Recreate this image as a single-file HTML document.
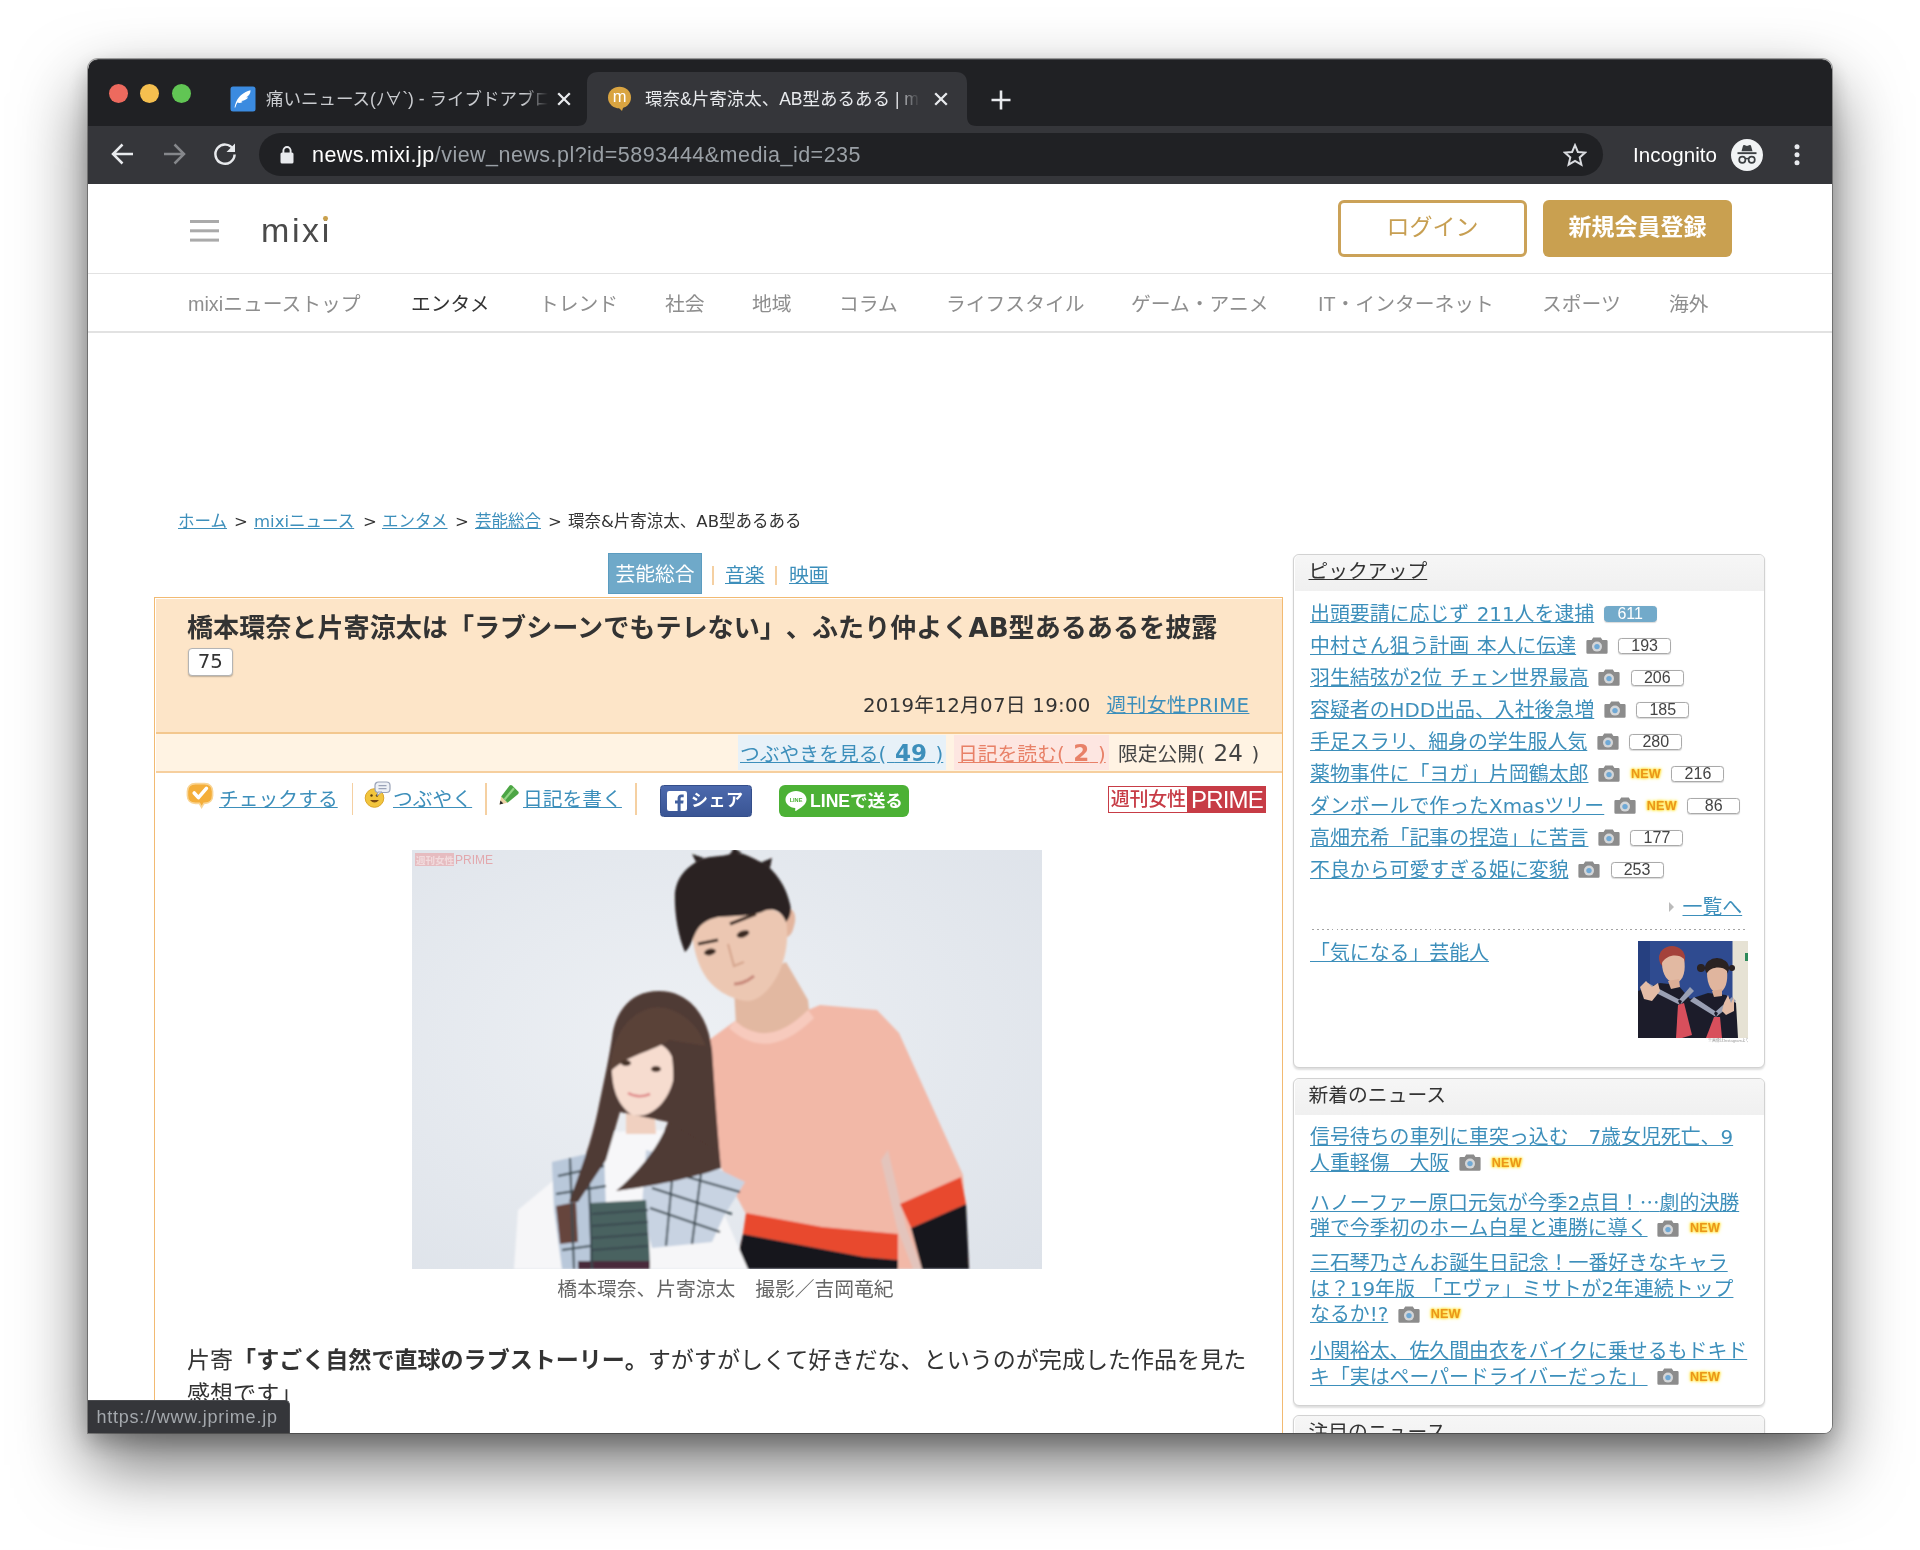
<!DOCTYPE html>
<html lang="ja">
<head>
<meta charset="utf-8">
<title>環奈&amp;片寄涼太、AB型あるある | mixiニュース</title>
<style>
*{box-sizing:border-box;margin:0;padding:0}
html,body{width:1920px;height:1550px;overflow:hidden;background:#fff}
body{text-spacing-trim:space-all;position:relative;font-family:"Liberation Sans","Noto Sans CJK JP",sans-serif;color:#333}
.abs{position:absolute}
a{color:#3d8fbb;text-decoration:underline}
#win{will-change:transform;position:absolute;left:88px;top:59px;width:1744px;height:1374px;border-radius:10px 10px 8px 0;background:#fff;overflow:hidden;
 box-shadow:0 0 0 1px rgba(0,0,0,.32),0 32px 70px rgba(0,0,0,.56),0 9px 22px rgba(0,0,0,.23)}
#shadow{position:absolute;left:88px;top:59px;width:1744px;height:1374px;border-radius:10px;}
/* chrome */
#tabstrip{position:absolute;left:0;top:0;width:1744px;height:67px;background:#202124;border-radius:10px 10px 0 0;box-shadow:inset 0 1px 0 rgba(255,255,255,.16)}
#toolbar{position:absolute;left:0;top:67px;width:1744px;height:58px;background:#35363a}
.tl{position:absolute;top:25px;width:19px;height:19px;border-radius:50%}
.tabtitle{position:absolute;top:28.4px;font-size:17.5px;line-height:24px;white-space:nowrap;overflow:hidden;color:#e8eaed}
#omni{position:absolute;left:171px;top:74px;width:1344px;height:43px;border-radius:22px;background:#202124}
/* page */
#page{position:absolute;left:0;top:125px;width:1744px;height:1249px;background:#fff;overflow:hidden}

#pg{position:absolute;left:-88px;top:-184px;width:1920px;height:1550px;font-family:"DejaVu Sans","Noto Sans CJK JP",sans-serif}
#pg .t{position:absolute;white-space:nowrap}
.nav{position:absolute;top:289px;height:30px;font-size:19.8px;line-height:30px;color:#8e8e8e;white-space:nowrap;font-family:"Liberation Sans","Noto Sans CJK JP",sans-serif}
.bc{position:absolute;top:510px;height:24px;font-size:16.5px;line-height:24px;white-space:nowrap;color:#333}

.sbox{position:absolute;left:1293px;width:472px;border:1.5px solid #d2d2d2;border-radius:6px;background:#fff;box-shadow:0 1.5px 2px rgba(0,0,0,.13)}
.shead{position:absolute;left:1294.5px;width:469px;height:36px;background:linear-gradient(#f6f6f6,#f0f0f0);border-radius:5px 5px 0 0;font-size:19.8px;line-height:34px;padding-left:14px;color:#333;white-space:nowrap}
.row{position:absolute;left:1310px;height:30px;font-size:19.9px;line-height:30px;white-space:nowrap;word-spacing:1.2px}
.item{position:absolute;left:1310px;font-size:19.9px;line-height:25.7px;white-space:nowrap;word-spacing:1.2px}
.cam{display:inline-block;width:22px;height:17px;vertical-align:-1.5px;margin-left:9.5px}
.new{display:inline-block;margin-left:11px;font-family:"Liberation Sans",sans-serif;font-weight:bold;font-size:12.6px;line-height:16px;color:#ea961c;text-shadow:0 0 2px #ffe23e,0 0 2px #ffe23e,0 0 3px #ffe23e,0 0 4px #ffe866;vertical-align:3px;text-decoration:none;letter-spacing:.2px}
.cnt{display:inline-block;width:53px;height:16.5px;margin-left:10.5px;border:1px solid #aaa;border-radius:3.5px;background:#fff;font-family:"Liberation Sans",sans-serif;font-size:16px;line-height:14.5px;color:#444;text-align:center;vertical-align:1.8px;box-shadow:0 .5px 1px rgba(0,0,0,.15)}
.cnt.hot{background:#72aaca;border-color:#72aaca;color:#fff;margin-left:9.5px}
.sep{position:absolute;width:1.6px;background:#f5d0a2}
</style>
</head>
<body>
<div id="win">
  <div id="tabstrip">
    <div class="tl" style="left:21px;background:#ed6a5e"></div>
    <div class="tl" style="left:52px;background:#f5bf4f"></div>
    <div class="tl" style="left:84px;background:#61c554"></div>
    <!-- active tab -->
    <svg class="abs" style="left:489px;top:13px" width="400" height="54" viewBox="0 0 400 54">
      <path d="M0 54 C8 54 10 50 10 44 L10 11 C10 4 14 0 21 0 L379 0 C386 0 390 4 390 11 L390 44 C390 50 392 54 400 54 Z" fill="#35363a"/>
    </svg>
    <!-- favicon 1 -->
    <svg class="abs" style="left:142px;top:27px" width="26" height="26" viewBox="0 0 26 26">
      <rect x="0.5" y="0.5" width="25" height="25" rx="2.5" fill="#3b8be0"/>
      <path d="M4.5 21.5 C6 14 9.5 7.5 20.5 4.2 C20.8 8 18.5 10.2 16.2 11.2 L18.2 11.6 C16.5 14 13.5 15 11.2 15 L12.6 16 C10.5 17.2 8.6 17 7.4 16.6 C6.4 18.2 5.8 19.8 5.4 21.6 Z" fill="#fff"/>
    </svg>
    <div class="tabtitle" style="left:178px;width:284px;color:#c9cbcf;-webkit-mask-image:linear-gradient(90deg,#000 258px,transparent 282px);mask-image:linear-gradient(90deg,#000 258px,transparent 282px)">痛いニュース(ﾉ∀`) - ライブドアブログ</div>
    <svg class="abs" style="left:468px;top:32px" width="16" height="16" viewBox="0 0 16 16"><path d="M2.2 2.2 L13.8 13.8 M13.8 2.2 L2.2 13.8" stroke="#e8eaed" stroke-width="2.3" fill="none"/></svg>
    <!-- favicon 2 : mixi -->
    <svg class="abs" style="left:519px;top:27px" width="26" height="26" viewBox="0 0 26 26">
      <ellipse cx="12.5" cy="11.5" rx="11.5" ry="10.8" fill="#d9a441"/>
      <path d="M10 20 L15 25 L17 19 Z" fill="#d9a441"/>
      <text x="12.6" y="16" font-family="Liberation Sans, sans-serif" font-size="16.5" text-anchor="middle" fill="#fff">m</text>
    </svg>
    <div class="tabtitle" style="left:557px;width:282px;-webkit-mask-image:linear-gradient(90deg,#000 250px,transparent 275px);mask-image:linear-gradient(90deg,#000 250px,transparent 275px)">環奈&amp;片寄涼太、AB型あるある | mixiニュース</div>
    <svg class="abs" style="left:845px;top:32px" width="16" height="16" viewBox="0 0 16 16"><path d="M2.2 2.2 L13.8 13.8 M13.8 2.2 L2.2 13.8" stroke="#e8eaed" stroke-width="2.3" fill="none"/></svg>
    <svg class="abs" style="left:902px;top:30px" width="22" height="22" viewBox="0 0 22 22"><path d="M11 1.5 V20.5 M1.5 11 H20.5" stroke="#e8eaed" stroke-width="2.6" fill="none"/></svg>
  </div>
  <div id="toolbar"></div>
  <!-- toolbar icons -->
  <svg class="abs" style="left:22px;top:83px" width="26" height="24" viewBox="0 0 26 24"><path d="M23 12 H3.5 M12.5 2.5 L3 12 L12.5 21.5" stroke="#e8eaed" stroke-width="2.5" fill="none"/></svg>
  <svg class="abs" style="left:73px;top:83px" width="26" height="24" viewBox="0 0 26 24"><path d="M3 12 H22.5 M13.5 2.5 L23 12 L13.5 21.5" stroke="#85878b" stroke-width="2.5" fill="none"/></svg>
  <svg class="abs" style="left:124px;top:82px" width="26" height="26" viewBox="0 0 26 26"><path d="M21.2 8.2 A9.6 9.6 0 1 0 22.6 13.5" stroke="#e8eaed" stroke-width="2.5" fill="none"/><path d="M23 2.5 V11 H14.5 Z" fill="#e8eaed"/></svg>
  <div id="omni"></div>
  <svg class="abs" style="left:192px;top:87px" width="14" height="18" viewBox="0 0 14 18"><rect x="0.5" y="6.5" width="13" height="11" rx="1.6" fill="#e8eaed"/><path d="M3.4 7 V4.6 a3.6 3.6 0 0 1 7.2 0 V7" stroke="#e8eaed" stroke-width="1.9" fill="none"/></svg>
  <div class="abs" id="url" style="left:224px;top:82px;font-size:21.5px;line-height:28px;color:#9aa0a6;white-space:nowrap;letter-spacing:0.47px"><span style="color:#fff">news.mixi.jp</span>/view_news.pl?id=5893444&amp;media_id=235</div>
  <svg class="abs" style="left:1475px;top:84px" width="24" height="24" viewBox="0 0 24 24"><path d="M12 2.2 L14.9 9 L22.2 9.6 L16.7 14.4 L18.4 21.6 L12 17.8 L5.6 21.6 L7.3 14.4 L1.8 9.6 L9.1 9 Z" stroke="#dadce0" stroke-width="2" fill="none" stroke-linejoin="miter"/></svg>
  <div class="abs" id="incog" style="left:1545px;top:82px;font-size:20.5px;line-height:28px;color:#fff;white-space:nowrap;letter-spacing:.1px">Incognito</div>
  <svg class="abs" style="left:1642px;top:79px" width="34" height="34" viewBox="0 0 34 34">
    <circle cx="17" cy="17" r="16" fill="#f1f3f4"/>
    <path d="M11.5 13.2 L13 7.8 Q13.3 6.8 14.3 7.1 L17 8 L19.7 7.1 Q20.7 6.8 21 7.8 L22.5 13.2 Z" fill="#3c4043"/>
    <rect x="7.5" y="14.2" width="19" height="1.9" fill="#3c4043"/>
    <circle cx="12.3" cy="21.7" r="3.1" stroke="#3c4043" stroke-width="1.7" fill="none"/>
    <circle cx="21.7" cy="21.7" r="3.1" stroke="#3c4043" stroke-width="1.7" fill="none"/>
    <path d="M15.2 21 Q17 19.8 18.8 21" stroke="#3c4043" stroke-width="1.5" fill="none"/>
  </svg>
  <svg class="abs" style="left:1704px;top:83px" width="10" height="26" viewBox="0 0 10 26"><circle cx="5" cy="4.8" r="2.5" fill="#e8eaed"/><circle cx="5" cy="12.8" r="2.5" fill="#e8eaed"/><circle cx="5" cy="20.8" r="2.5" fill="#e8eaed"/></svg>

  <div id="page">
    <div id="pg">
      <!-- header -->
      <div class="abs" style="left:190px;top:220px;width:29px;height:2.5px;background:#aaa;box-shadow:0 9.3px 0 #aaa,0 18.6px 0 #aaa"></div>
      <div class="t" id="logo" style="left:261px;top:209px;font-family:'Liberation Sans',sans-serif;font-size:34px;line-height:42px;letter-spacing:2.6px;color:#4a4a4a">mixi</div>
      <div class="abs" id="gdot" style="left:322.9px;top:216.4px;width:4.8px;height:4.8px;border-radius:50%;background:#c9a04b"></div>
      <div class="t" style="left:1338px;top:200px;width:189px;height:57px;border:3px solid #cba258;border-radius:6px;text-align:center;font-size:23px;line-height:49px;color:#c79f52;font-family:'Liberation Sans','Noto Sans CJK JP',sans-serif">ログイン</div>
      <div class="t" style="left:1543px;top:200px;width:189px;height:57px;background:#c9a050;border-radius:6px;text-align:center;font-size:23px;line-height:54px;color:#fff;font-weight:bold;font-family:'Liberation Sans','Noto Sans CJK JP',sans-serif">新規会員登録</div>
      <div class="abs" style="left:88px;top:272.5px;width:1744px;height:1.5px;background:#e2e2e2"></div>
      <div class="abs" style="left:88px;top:331px;width:1744px;height:1.5px;background:#e2e2e2"></div>
      <!-- nav -->
      <div class="nav" style="left:188px">mixiニューストップ</div>
      <div class="nav" style="left:411px;color:#333">エンタメ</div>
      <div class="nav" style="left:539px">トレンド</div>
      <div class="nav" style="left:665px">社会</div>
      <div class="nav" style="left:752px">地域</div>
      <div class="nav" style="left:839px">コラム</div>
      <div class="nav" style="left:946px">ライフスタイル</div>
      <div class="nav" style="left:1131px">ゲーム・アニメ</div>
      <div class="nav" style="left:1318px">IT・インターネット</div>
      <div class="nav" style="left:1542px">スポーツ</div>
      <div class="nav" style="left:1669px">海外</div>
      <!-- breadcrumb -->
      <div class="bc" style="left:178px"><a>ホーム</a></div>
      <div class="bc" style="left:234px">&gt;</div>
      <div class="bc" style="left:254px"><a>mixiニュース</a></div>
      <div class="bc" style="left:363px">&gt;</div>
      <div class="bc" style="left:382px"><a>エンタメ</a></div>
      <div class="bc" style="left:455px">&gt;</div>
      <div class="bc" style="left:475px"><a>芸能総合</a></div>
      <div class="bc" style="left:548px">&gt;</div>
      <div class="bc" style="left:568px">環奈&amp;片寄涼太、AB型あるある</div>
      <!-- category tabs -->
      <div class="t" style="left:608px;top:553px;width:94px;height:41px;background:#6fa9c9;border:1.5px solid #5b9cc0;color:#fff;font-size:19.8px;line-height:41px;text-align:center">芸能総合</div>
      <div class="sep" style="left:712px;top:566px;height:19px"></div>
      <div class="t" style="left:725px;top:561px;font-size:19.8px;line-height:30px"><a>音楽</a></div>
      <div class="sep" style="left:775px;top:566px;height:19px"></div>
      <div class="t" style="left:789px;top:561px;font-size:19.8px;line-height:30px"><a>映画</a></div>
      <!-- article frame -->
      <div class="abs" style="left:154px;top:597px;width:1129.4px;height:900px;border:1.6px solid #f2ba72;border-bottom:none;background:#fff"></div>
      <div class="abs" style="left:156px;top:599px;width:1126px;height:133px;background:#fde5c8"></div>
      <div class="abs" style="left:156px;top:732px;width:1126px;height:1.5px;background:#f3c78e"></div>
      <div class="abs" style="left:156px;top:733.5px;width:1126px;height:37.5px;background:#fff3e3"></div>
      <div class="abs" style="left:156px;top:771px;width:1126px;height:1.5px;background:#f6cf9e"></div>
      <!-- ARTICLE -->
      <div class="t" id="ttl" style="left:187px;top:609px;font-size:26.1px;line-height:38px;font-weight:bold;color:#333">橋本環奈と片寄涼太は「ラブシーンでもテレない」、ふたり仲よくAB型あるあるを披露</div>
      <div class="t" style="left:188px;top:648px;width:44.5px;height:27.5px;border:1px solid #b4b4b4;border-radius:4px;background:#fff;box-shadow:0 1px 1.5px rgba(0,0,0,.25);text-align:center;font-size:19.8px;line-height:25px;color:#333">75</div>
      <div class="t" id="date" style="left:863px;top:691px;font-size:19.8px;line-height:30px;color:#333;letter-spacing:.25px">2019年12月07日 19:00</div>
      <div class="t" id="src" style="left:1106.5px;top:691px;font-size:19.8px;line-height:30px;letter-spacing:.3px"><a>週刊女性PRIME</a></div>
      <!-- sub bar -->
      <div class="abs" style="left:738px;top:735px;width:208px;height:35px;background:#e7f1f8"></div>
      <div class="abs" style="left:954px;top:735px;width:155px;height:35px;background:#fde6e1"></div>
      <div class="t" id="sb1" style="word-spacing:2.4px;left:740px;top:737px;font-size:19.8px;line-height:32px"><a>つぶやきを見る( <b style="font-size:23px">49</b> )</a></div>
      <div class="t" id="sb2" style="word-spacing:2.4px;left:958px;top:737px;font-size:19.8px;line-height:32px"><a style="color:#e88168">日記を読む( <b style="font-size:23px">2</b> )</a></div>
      <div class="t" id="sb3" style="word-spacing:2.4px;left:1118px;top:737px;font-size:19.8px;line-height:32px;color:#444">限定公開( <span style="font-size:23px">24</span> )</div>
      <!-- action row -->
      <svg class="abs" style="left:186px;top:782px" width="28" height="27" viewBox="0 0 28 27">
        <path d="M9.5 1.6 H18.5 C23.6 1.6 26.6 4.8 26.6 9.4 V13.6 C26.6 18.2 23.6 21.4 18.5 21.4 H18 L15.6 25.4 L13.4 21.4 H9.5 C4.4 21.4 1.4 18.2 1.4 13.6 V9.4 C1.4 4.8 4.4 1.6 9.5 1.6 Z" fill="#f4ae3a" stroke="#f9d596" stroke-width="1.6"/>
        <path d="M8.2 11 L12.4 15.6 L20.4 6.4" stroke="#fff" stroke-width="3.6" fill="none" stroke-linecap="round" stroke-linejoin="round"/>
      </svg>
      <div class="t" style="left:219px;top:784.5px;font-size:19.8px;line-height:30px"><a>チェックする</a></div>
      <div class="sep" style="left:351.5px;top:783px;height:32px"></div>
      <svg class="abs" style="left:364px;top:781px" width="27" height="28" viewBox="0 0 27 28">
        <circle cx="10.5" cy="17" r="9.3" fill="#f2c53d" stroke="#dba62c" stroke-width="1"/>
        <circle cx="7.5" cy="14.5" r="1.2" fill="#5a3d10"/><circle cx="13" cy="14.5" r="1.2" fill="#5a3d10"/>
        <path d="M6 19 Q10.5 24 15 19 Z" fill="#7a4a12"/>
        <rect x="11" y="1" width="15" height="10.5" rx="3.5" fill="#eef1f6" stroke="#9aa3b8" stroke-width="1.2"/>
        <path d="M14 11 L13 14.5 L18 11 Z" fill="#eef1f6" stroke="#9aa3b8" stroke-width="1"/>
        <path d="M14.5 4.6 H22.5 M14.5 7.6 H22.5" stroke="#9aa3b8" stroke-width="1.1"/>
      </svg>
      <div class="t" style="left:393px;top:784.5px;font-size:19.8px;line-height:30px"><a>つぶやく</a></div>
      <div class="sep" style="left:485px;top:783px;height:32px"></div>
      <svg class="abs" style="left:497px;top:783px" width="24" height="24" viewBox="0 0 24 24">
        <path d="M2.6 21.4 L4.2 13.4 L10.6 19.8 Z" fill="#ecd2a4"/><path d="M2.6 21.4 L3.4 17.6 L6.4 20.6 Z" fill="#2a2a2a"/>
        <path d="M4.2 13.4 L12.6 2.6 Q13.8 1.4 15.2 2.6 L21.2 8.4 Q22.4 9.8 21.2 11 L10.6 19.8 Z" fill="#4ca544"/>
        <path d="M7.4 16.6 L17 5.2" stroke="#93d584" stroke-width="2.2"/>
      </svg>
      <div class="t" style="left:523px;top:784.5px;font-size:19.8px;line-height:30px"><a>日記を書く</a></div>
      <div class="sep" style="left:635px;top:783px;height:32px"></div>
      <!-- fb share -->
      <div class="abs" style="left:660px;top:784.5px;width:92px;height:32px;border-radius:3.5px;background:linear-gradient(#4c69ad,#3a5594);border:1px solid #344e8a"></div>
      <svg class="abs" style="left:667px;top:791px" width="20" height="20" viewBox="0 0 20 20"><rect x="0" y="0" width="20" height="20" rx="2.2" fill="#fff"/><path d="M13.6 20 V12.4 H16.2 L16.6 9.4 H13.6 V7.6 C13.6 6.7 13.9 6.2 15.1 6.2 H16.7 V3.5 C16.4 3.46 15.5 3.4 14.4 3.4 C12.1 3.4 10.6 4.8 10.6 7.3 V9.4 H8 V12.4 H10.6 V20 Z" fill="#42609f"/></svg>
      <div class="t" style="left:691px;top:786px;font-size:17px;line-height:29px;color:#fff;font-weight:bold;letter-spacing:.5px">シェア</div>
      <!-- line -->
      <div class="abs" style="left:778.5px;top:785px;width:130px;height:32px;border-radius:6px;background:#4cb135"></div>
      <svg class="abs" style="left:784px;top:789px" width="24" height="24" viewBox="0 0 24 24"><path d="M12 2 C18 2 22.5 5.8 22.5 10.5 C22.5 14.6 19 17.4 15.6 19.6 C14 20.7 12.4 21.9 11.6 22 C10.8 22 11.5 20.4 11.2 19 C5.6 18.6 1.5 15 1.5 10.5 C1.5 5.8 6 2 12 2 Z" fill="#fff"/><text x="12" y="12.8" font-family="Liberation Sans, sans-serif" font-weight="bold" font-size="5.6" text-anchor="middle" fill="#4cb135">LINE</text></svg>
      <div class="t" style="left:810px;top:786px;font-size:17.6px;line-height:30px;color:#fff;font-weight:bold;font-family:'Liberation Sans','Noto Sans CJK JP',sans-serif">LINEで送る</div>
      <!-- source logo -->
      <div class="abs" style="left:1108px;top:786px;width:158px;height:27px;background:#c73c46"></div>
      <div class="t" style="left:1109.4px;top:787.3px;width:77.6px;height:24.4px;background:#fff;color:#c73c46;font-size:19px;line-height:22px;font-weight:500;letter-spacing:-.3px;text-align:center;font-family:'Noto Sans CJK JP',sans-serif">週刊女性</div>
      <div class="t" style="left:1188px;top:786px;width:78px;height:27px;color:#fff;font-size:24px;line-height:28px;text-align:center;letter-spacing:-.8px;font-family:'Liberation Sans',sans-serif">PRIME</div>
      <!-- PHOTO -->
      <svg class="abs" style="left:412px;top:850px" width="630" height="419" viewBox="0 0 630 419">
        <defs>
          <radialGradient id="pbg" cx="42%" cy="45%" r="80%"><stop offset="0" stop-color="#edf0f4"/><stop offset="1" stop-color="#dde2e9"/></radialGradient>
          <filter id="soft" x="-5%" y="-5%" width="110%" height="110%"><feGaussianBlur stdDeviation="1"/></filter>
          <clipPath id="pclip"><rect width="630" height="419"/></clipPath>
        </defs>
        <rect width="630" height="419" fill="url(#pbg)"/>
        <g clip-path="url(#pclip)" filter="url(#soft)">
          <!-- man neck -->
          <path d="M322 138 L324 176 L360 196 L398 168 L396 150 L374 112 Z" fill="#e2b8a1"/>
          <!-- sweater -->
          <path d="M297 190 L323 171 Q356 200 396 160 L408 155 L465 160 L487 183 L551 325 L557 419 L323 419 L335 366 L309 317 L299 261 L295 200 Z" fill="#f2b8a7"/>
          <path d="M323 171 Q356 200 396 160 L402 168 Q356 214 317 178 Z" fill="#f7cabd"/>
          <path d="M476 300 L494 377 L510 419 L501 419 L485 378 L469 310 Z" fill="#e3c4bc"/>
          <!-- body stripes -->
          <path d="M334 363 L410 377 L486 384 L486 410 L452 407 L331 384 Z" fill="#e8482d"/>
          <path d="M331 384 L452 407 L486 410 L486 419 L323 419 Z" fill="#17171d"/>
          <!-- sleeve stripes -->
          <path d="M488 354 L549 327 L554 354 L499 378 Z" fill="#e8482d"/>
          <path d="M499 378 L554 354 L557 419 L510 419 Z" fill="#17171d"/>
          <!-- man ear + face -->
          <path d="M370 60 C380 54 386 64 382 76 C380 86 374 90 370 86 Z" fill="#e3b59e"/>
          <path d="M280 84 C282 100 285 112 292 124 C300 138 318 150 336 151 C350 150 362 134 368 120 C374 106 377 88 374 70 C368 56 344 56 320 60 C300 62 284 70 280 84 Z" fill="#ecc7b2"/>
          <!-- man hair -->
          <path d="M273 102 C266 86 262 62 263 42 C265 28 272 20 284 12 C296 4 310 8 321 3 C334 2 342 10 352 13 C364 22 374 36 378 54 C380 62 378 68 374 72 C370 62 362 56 350 62 C340 66 324 66 306 67 C296 69 288 74 284 82 C280 90 278 98 273 102 Z" fill="#2b2422"/>
          <path d="M284 12 L280 4 L292 8 Z M318 4 L322 -2 L330 3 Z M350 12 L360 8 L358 18 Z" fill="#2b2422"/>
          <!-- man features -->
          <ellipse cx="298" cy="102" rx="6" ry="3.2" fill="#3a2a24" transform="rotate(-12 298 102)"/><ellipse cx="331" cy="84" rx="6.5" ry="3.4" fill="#3a2a24" transform="rotate(-18 331 84)"/>
          <path d="M286 94 L306 90 M318 74 L344 64" stroke="#3a2a24" stroke-width="3.2"/>
          <path d="M322 134 Q332 134 342 126" stroke="#c98a7c" stroke-width="3" fill="none"/>
          <path d="M316 94 L322 116 L332 112" stroke="#d6a68e" stroke-width="2.2" fill="none"/>
          <!-- girl sleeves / blouse -->
          <path d="M142 330 L106 360 L102 419 L150 419 Z" fill="#f6f6f8"/>
          <path d="M238 360 L312 364 L336 419 L238 419 Z" fill="#f6f6f8"/>
          <path d="M196 282 L254 280 L262 300 L232 360 L190 360 L186 300 Z" fill="#f7f7f9"/>
          <!-- plaid -->
          <path d="M140 312 L192 300 L196 419 L150 419 L142 360 Z" fill="#b9c8da"/>
          <path d="M234 300 L300 316 L333 332 L312 366 L300 392 L240 398 L230 356 Z" fill="#c8d3e2"/>
          <path d="M178 353 L234 350 L238 412 L178 412 Z" fill="#486260"/>
          <path d="M144 356 L164 352 L166 392 L148 394 Z" fill="#66443c"/>
          <path d="M166 411 L238 411 L238 419 L166 419 Z" fill="#4a2a3a"/>
          <path d="M146 326 L192 316 M144 344 L194 336 M150 400 L178 396 M158 308 L162 419 M176 304 L180 419 M244 318 L328 342 M240 338 L320 364 M238 358 L308 382 M262 308 L254 396 M290 316 L280 394 M180 364 L236 360 M180 376 L236 372 M180 388 L236 384 M180 400 L236 396" stroke="#3a4850" stroke-width="2" fill="none"/>
          <!-- girl neck -->
          <path d="M214 256 L214 284 L244 284 L242 256 Z" fill="#f0d0c0"/>
          <!-- girl hair back -->
          <path d="M247 141 C214 141 202 168 200 188 C196 214 190 240 186 260 C180 290 168 322 157 352 L166 352 L194 310 L208 262 L256 272 C246 300 222 326 204 341 C240 336 282 328 309 318 C306 290 303 244 300 200 C296 164 276 141 247 141 Z" fill="#503a34"/>
          <!-- girl face -->
          <path d="M200 214 C199 238 206 256 220 265 C240 270 258 250 262 226 C264 206 256 192 232 190 C212 190 201 198 200 214 Z" fill="#f6dccf"/>
          <!-- fringe -->
          <path d="M198 222 C198 180 226 152 254 158 C284 166 298 194 298 222 C290 206 276 196 258 190 C240 202 216 204 198 222 Z" fill="#5a4239"/>
          <path d="M256 190 C264 210 262 250 256 272 L304 300 C305 262 301 214 294 196 Z" fill="#503a34"/>
          <ellipse cx="214" cy="213" rx="5" ry="3" fill="#4a342c"/><ellipse cx="244" cy="219" rx="5" ry="3" fill="#4a342c"/>
          <path d="M216 243 Q226 249 238 244" stroke="#e08a8a" stroke-width="2.6" fill="none"/>
        </g>
        <rect x="3" y="3" width="39" height="13" fill="#e7aeb2" opacity=".75"/>
        <text x="4" y="13.5" font-family="Noto Sans CJK JP, sans-serif" font-size="9.5" font-weight="bold" fill="#f3dfe1" opacity=".9">週刊女性</text>
        <text x="43" y="14" font-family="Liberation Sans, sans-serif" font-size="12" fill="#e3a3a8" opacity=".9" textLength="38" lengthAdjust="spacingAndGlyphs">PRIME</text>
      </svg>
      <div class="t" id="cap" style="left:410.5px;top:1276px;width:630px;text-align:center;font-size:19.8px;line-height:28px;color:#666">橋本環奈、片寄涼太　撮影／吉岡竜紀</div>
      <div class="t" id="body1" style="left:187px;top:1344px;font-size:23.05px;line-height:33.5px;color:#333">片寄<b>「すごく自然で直球のラブストーリー。</b>すがすがしくて好きだな、というのが完成した作品を見た<br>感想です」</div>
      <!-- SIDEBAR -->
      <div class="sbox" style="top:553.5px;height:514px"></div>
      <div class="shead" style="top:555px"><span style="text-decoration:underline">ピックアップ</span></div>
      <div class="row" id="r1" style="top:599.5px"><a>出頭要請に応じず 211人を逮捕</a><span class="cnt hot">611</span></div>
      <div class="row" id="r2" style="top:631.5px"><a>中村さん狙う計画 本人に伝達</a><svg class="cam" viewBox="0 0 22 17"><path d="M1.6 3 H5.6 L7.2 .6 H14.8 L16.4 3 H20.4 Q21.6 3 21.6 4.2 V15.6 Q21.6 16.8 20.4 16.8 H1.6 Q.4 16.8 .4 15.6 V4.2 Q.4 3 1.6 3 Z" fill="#8c8c8c"/><circle cx="11" cy="9.6" r="5" fill="#d4d6d8"/><circle cx="11" cy="9.6" r="2.7" fill="#6fa9d6"/></svg><span class="cnt">193</span></div>
      <div class="row" id="r3" style="top:663.5px"><a>羽生結弦が2位 チェン世界最高</a><svg class="cam" viewBox="0 0 22 17"><path d="M1.6 3 H5.6 L7.2 .6 H14.8 L16.4 3 H20.4 Q21.6 3 21.6 4.2 V15.6 Q21.6 16.8 20.4 16.8 H1.6 Q.4 16.8 .4 15.6 V4.2 Q.4 3 1.6 3 Z" fill="#8c8c8c"/><circle cx="11" cy="9.6" r="5" fill="#d4d6d8"/><circle cx="11" cy="9.6" r="2.7" fill="#6fa9d6"/></svg><span class="cnt">206</span></div>
      <div class="row" id="r4" style="top:695.5px"><a>容疑者のHDD出品、入社後急増</a><svg class="cam" viewBox="0 0 22 17"><path d="M1.6 3 H5.6 L7.2 .6 H14.8 L16.4 3 H20.4 Q21.6 3 21.6 4.2 V15.6 Q21.6 16.8 20.4 16.8 H1.6 Q.4 16.8 .4 15.6 V4.2 Q.4 3 1.6 3 Z" fill="#8c8c8c"/><circle cx="11" cy="9.6" r="5" fill="#d4d6d8"/><circle cx="11" cy="9.6" r="2.7" fill="#6fa9d6"/></svg><span class="cnt">185</span></div>
      <div class="row" id="r5" style="top:727.5px"><a>手足スラリ、細身の学生服人気</a><svg class="cam" viewBox="0 0 22 17"><path d="M1.6 3 H5.6 L7.2 .6 H14.8 L16.4 3 H20.4 Q21.6 3 21.6 4.2 V15.6 Q21.6 16.8 20.4 16.8 H1.6 Q.4 16.8 .4 15.6 V4.2 Q.4 3 1.6 3 Z" fill="#8c8c8c"/><circle cx="11" cy="9.6" r="5" fill="#d4d6d8"/><circle cx="11" cy="9.6" r="2.7" fill="#6fa9d6"/></svg><span class="cnt">280</span></div>
      <div class="row" id="r6" style="top:759.5px"><a>薬物事件に「ヨガ」片岡鶴太郎</a><svg class="cam" viewBox="0 0 22 17"><path d="M1.6 3 H5.6 L7.2 .6 H14.8 L16.4 3 H20.4 Q21.6 3 21.6 4.2 V15.6 Q21.6 16.8 20.4 16.8 H1.6 Q.4 16.8 .4 15.6 V4.2 Q.4 3 1.6 3 Z" fill="#8c8c8c"/><circle cx="11" cy="9.6" r="5" fill="#d4d6d8"/><circle cx="11" cy="9.6" r="2.7" fill="#6fa9d6"/></svg><span class="new">NEW</span><span class="cnt">216</span></div>
      <div class="row" id="r7" style="top:791.5px"><a>ダンボールで作ったXmasツリー</a><svg class="cam" viewBox="0 0 22 17"><path d="M1.6 3 H5.6 L7.2 .6 H14.8 L16.4 3 H20.4 Q21.6 3 21.6 4.2 V15.6 Q21.6 16.8 20.4 16.8 H1.6 Q.4 16.8 .4 15.6 V4.2 Q.4 3 1.6 3 Z" fill="#8c8c8c"/><circle cx="11" cy="9.6" r="5" fill="#d4d6d8"/><circle cx="11" cy="9.6" r="2.7" fill="#6fa9d6"/></svg><span class="new">NEW</span><span class="cnt">86</span></div>
      <div class="row" id="r8" style="top:823.5px"><a>高畑充希「記事の捏造」に苦言</a><svg class="cam" viewBox="0 0 22 17"><path d="M1.6 3 H5.6 L7.2 .6 H14.8 L16.4 3 H20.4 Q21.6 3 21.6 4.2 V15.6 Q21.6 16.8 20.4 16.8 H1.6 Q.4 16.8 .4 15.6 V4.2 Q.4 3 1.6 3 Z" fill="#8c8c8c"/><circle cx="11" cy="9.6" r="5" fill="#d4d6d8"/><circle cx="11" cy="9.6" r="2.7" fill="#6fa9d6"/></svg><span class="cnt">177</span></div>
      <div class="row" id="r9" style="top:855.5px"><a>不良から可愛すぎる姫に変貌</a><svg class="cam" viewBox="0 0 22 17"><path d="M1.6 3 H5.6 L7.2 .6 H14.8 L16.4 3 H20.4 Q21.6 3 21.6 4.2 V15.6 Q21.6 16.8 20.4 16.8 H1.6 Q.4 16.8 .4 15.6 V4.2 Q.4 3 1.6 3 Z" fill="#8c8c8c"/><circle cx="11" cy="9.6" r="5" fill="#d4d6d8"/><circle cx="11" cy="9.6" r="2.7" fill="#6fa9d6"/></svg><span class="cnt">253</span></div>
      <svg class="abs" style="left:1668px;top:901px" width="7" height="12" viewBox="0 0 7 12"><path d="M1 1 L6 6 L1 11 Z" fill="#bbb"/></svg>
      <div class="row" style="left:1682.5px;top:893px"><a>一覧へ</a></div>
      <div class="abs" style="left:1312px;top:928.8px;width:436px;height:1.7px;background:repeating-linear-gradient(90deg,#a4a4a4 0 1.8px,transparent 1.8px 4.9px)"></div>
      <div class="row" style="top:938.5px"><a>「気になる」芸能人</a></div>
      <!-- THUMB -->
      <svg class="abs" style="left:1638px;top:941px" width="110" height="102" viewBox="0 0 110 102">
        <defs><filter id="soft2"><feGaussianBlur stdDeviation="0.7"/></filter><clipPath id="tclip"><rect width="110" height="97"/></clipPath></defs>
        <rect width="110" height="97" fill="#2f4b90"/>
        <g clip-path="url(#tclip)" filter="url(#soft2)">
          <rect x="0" y="0" width="12" height="97" fill="#263f80"/>
          <rect x="94.5" y="0" width="16" height="97" fill="#e6e2d4"/>
          <rect x="107" y="12" width="3" height="8" fill="#2e8a5a"/>
          <!-- bodies -->
          <path d="M0 50 L22 42 L40 44 L52 58 L70 52 L88 54 L98 62 L100 97 L0 97 Z" fill="#1c1e2c"/>
          <!-- figure 1 -->
          <ellipse cx="34" cy="17" rx="13" ry="12" fill="#a4433a"/>
          <path d="M24 22 C24 34 30 42 38 42 C46 40 48 28 46 18 C40 12 28 14 24 22 Z" fill="#e2b9a2"/>
          <path d="M30 40 L33 48 L42 46 L41 38 Z" fill="#dcae96"/>
          <!-- figure 2 -->
          <ellipse cx="79" cy="27" rx="12" ry="10" fill="#2a2020"/>
          <circle cx="63" cy="27" r="4" fill="#2a2020"/><circle cx="94" cy="27" r="3" fill="#2a2020"/>
          <path d="M69 32 C69 44 74 52 80 52 C88 50 90 40 89 30 C84 24 72 26 69 32 Z" fill="#e0b59e"/>
          <path d="M74 50 L76 56 L84 55 L84 48 Z" fill="#d8aa92"/>
          <!-- collars -->
          <path d="M6 46 L42 64 L44 60 L10 42 Z M56 50 L42 64 L40 60 L52 46 Z" fill="#9aa0b4"/>
          <path d="M52 60 L78 76 L80 72 L56 56 Z M98 60 L78 76 L76 72 L94 56 Z" fill="#9aa0b4"/>
          <!-- ties -->
          <path d="M40 64 L46 62 L54 94 L44 97 L38 97 Z" fill="#d8505c"/>
          <path d="M76 76 L82 76 L84 97 L68 97 Z" fill="#d8505c"/>
          <!-- hands -->
          <path d="M2 46 L8 40 L14 46 L20 42 L22 50 L14 60 L6 58 Z" fill="#e4bca6"/>
          <path d="M86 62 L90 54 L93 62 L96 56 L96 70 L88 74 L84 70 Z" fill="#e4bca6"/>
        </g>
        <text x="70" y="100.5" font-family="Liberation Sans, Noto Sans CJK JP, sans-serif" font-size="4" fill="#999">※画像はInstagramより</text>
      </svg>
      <div class="sbox" style="top:1077.5px;height:328px"></div>
      <div class="shead" style="top:1079px">新着のニュース</div>
      <div class="item" style="top:1125px"><a>信号待ちの車列に車突っ込む　7歳女児死亡、9<br>人重軽傷　大阪</a><svg class="cam" viewBox="0 0 22 17"><path d="M1.6 3 H5.6 L7.2 .6 H14.8 L16.4 3 H20.4 Q21.6 3 21.6 4.2 V15.6 Q21.6 16.8 20.4 16.8 H1.6 Q.4 16.8 .4 15.6 V4.2 Q.4 3 1.6 3 Z" fill="#8c8c8c"/><circle cx="11" cy="9.6" r="5" fill="#d4d6d8"/><circle cx="11" cy="9.6" r="2.7" fill="#6fa9d6"/></svg><span class="new">NEW</span></div>
      <div class="item" style="top:1188.5px"><a>ハノーファー原口元気が今季2点目！<span style="font-family:'Noto Sans CJK JP',sans-serif">…</span>劇的決勝<br>弾で今季初のホーム白星と連勝に導く</a><svg class="cam" viewBox="0 0 22 17"><path d="M1.6 3 H5.6 L7.2 .6 H14.8 L16.4 3 H20.4 Q21.6 3 21.6 4.2 V15.6 Q21.6 16.8 20.4 16.8 H1.6 Q.4 16.8 .4 15.6 V4.2 Q.4 3 1.6 3 Z" fill="#8c8c8c"/><circle cx="11" cy="9.6" r="5" fill="#d4d6d8"/><circle cx="11" cy="9.6" r="2.7" fill="#6fa9d6"/></svg><span class="new">NEW</span></div>
      <div class="item" style="top:1251px"><a>三石琴乃さんお誕生日記念！一番好きなキャラ<br>は？19年版 「エヴァ」ミサトが2年連続トップ<br>なるか!?</a><svg class="cam" viewBox="0 0 22 17"><path d="M1.6 3 H5.6 L7.2 .6 H14.8 L16.4 3 H20.4 Q21.6 3 21.6 4.2 V15.6 Q21.6 16.8 20.4 16.8 H1.6 Q.4 16.8 .4 15.6 V4.2 Q.4 3 1.6 3 Z" fill="#8c8c8c"/><circle cx="11" cy="9.6" r="5" fill="#d4d6d8"/><circle cx="11" cy="9.6" r="2.7" fill="#6fa9d6"/></svg><span class="new">NEW</span></div>
      <div class="item" style="top:1339px"><a>小関裕太、佐久間由衣をバイクに乗せるもドキド<br>キ「実はペーパードライバーだった」</a><svg class="cam" viewBox="0 0 22 17"><path d="M1.6 3 H5.6 L7.2 .6 H14.8 L16.4 3 H20.4 Q21.6 3 21.6 4.2 V15.6 Q21.6 16.8 20.4 16.8 H1.6 Q.4 16.8 .4 15.6 V4.2 Q.4 3 1.6 3 Z" fill="#8c8c8c"/><circle cx="11" cy="9.6" r="5" fill="#d4d6d8"/><circle cx="11" cy="9.6" r="2.7" fill="#6fa9d6"/></svg><span class="new">NEW</span></div>
      <div class="sbox" style="top:1414.5px;height:200px"></div>
      <div class="shead" style="top:1416px">注目のニュース</div>
      <!-- STATUS -->
      <div class="abs" style="left:88px;top:1399.5px;width:201.5px;height:34px;background:#35363a;border-top-right-radius:5px;border-top:1px solid #4a4b4f;border-right:1px solid #4a4b4f"></div>
      <div class="t" id="status" style="left:96.5px;top:1404px;font-family:'Liberation Sans',sans-serif;font-size:18px;line-height:26px;color:#a4a8ad;letter-spacing:.77px">https://www.jprime.jp</div>
    </div>
  </div>
</div>
</body>
</html>
